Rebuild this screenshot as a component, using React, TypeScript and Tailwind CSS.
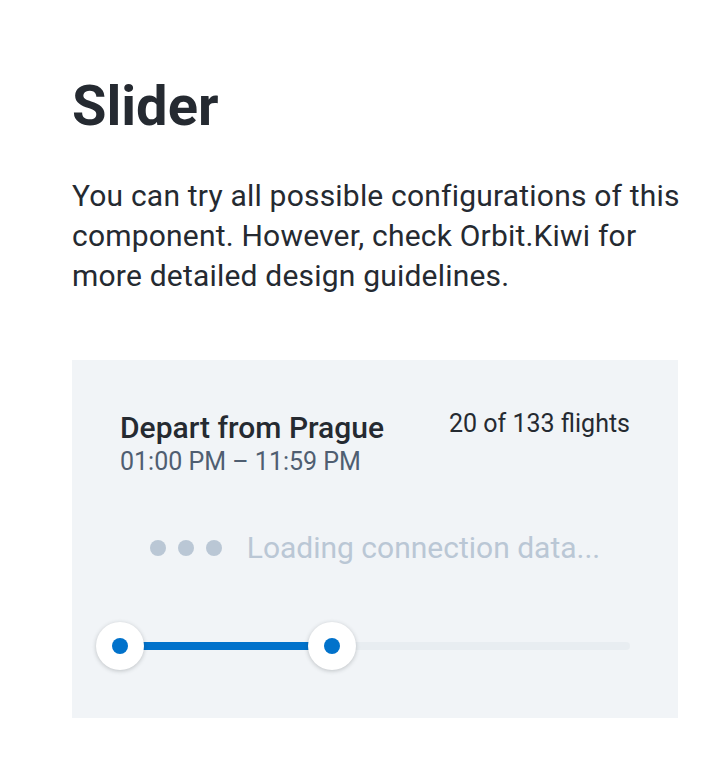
export default function App() {
  const min = 0;
  const max = 41.6;

  return (
    <div
      className="min-h-[758px] bg-white pl-[72px] pt-[74px] text-[#252a31]"
      style={{ fontFamily: "Roboto, 'Liberation Sans', sans-serif" }}
    >
      <h1 className="text-[56px] font-bold leading-[64px]">Slider</h1>
      <p className="mt-[38px] w-[620px] text-[30px] leading-[40px] tracking-[0.2px]">
        You can try all possible configurations of this component. However, check Orbit.Kiwi for
        more detailed design guidelines.
      </p>

      <div className="mt-[64px] w-[606px] bg-[#f1f4f7] px-[48px] pt-[48px] pb-[48px]">
        <div className="flex items-start justify-between">
          <div className="flex flex-col">
            <span className="text-[30px] font-medium leading-[40px]">Depart from Prague</span>
            <span className="text-[25px] leading-[28px] text-[#4f5e71]">01:00 PM – 11:59 PM</span>
          </div>
          <span className="text-[25px] leading-[32px]">20 of 133 flights</span>
        </div>

        <div className="mt-[56px] flex items-center justify-center gap-[25px]">
          <div className="flex items-center gap-[12px]">
            <span className="h-[16px] w-[16px] rounded-full bg-[#bac7d5]" />
            <span className="h-[16px] w-[16px] rounded-full bg-[#bac7d5]" />
            <span className="h-[16px] w-[16px] rounded-full bg-[#bac7d5]" />
          </div>
          <span className="text-[30px] leading-[32px] text-[#bac7d5]">Loading connection data...</span>
        </div>

        <div className="relative mt-[58px] h-[48px]">
          <div className="absolute left-0 right-0 top-[20px] h-[8px] rounded-full bg-[#e8edf1]" />
          <div
            className="absolute top-[20px] h-[8px] bg-[#0172cb]"
            style={{ left: `${min}%`, width: `${max - min}%` }}
          />
          {[min, max].map((v, i) => (
            <div
              key={i}
              className="absolute top-0 flex h-[48px] w-[48px] -translate-x-1/2 items-center justify-center rounded-full bg-white shadow-[0_1px_4px_rgba(37,42,49,0.25)]"
              style={{ left: `${v}%` }}
            >
              <span className="h-[16px] w-[16px] rounded-full bg-[#0172cb]" />
            </div>
          ))}
        </div>
      </div>
    </div>
  );
}
